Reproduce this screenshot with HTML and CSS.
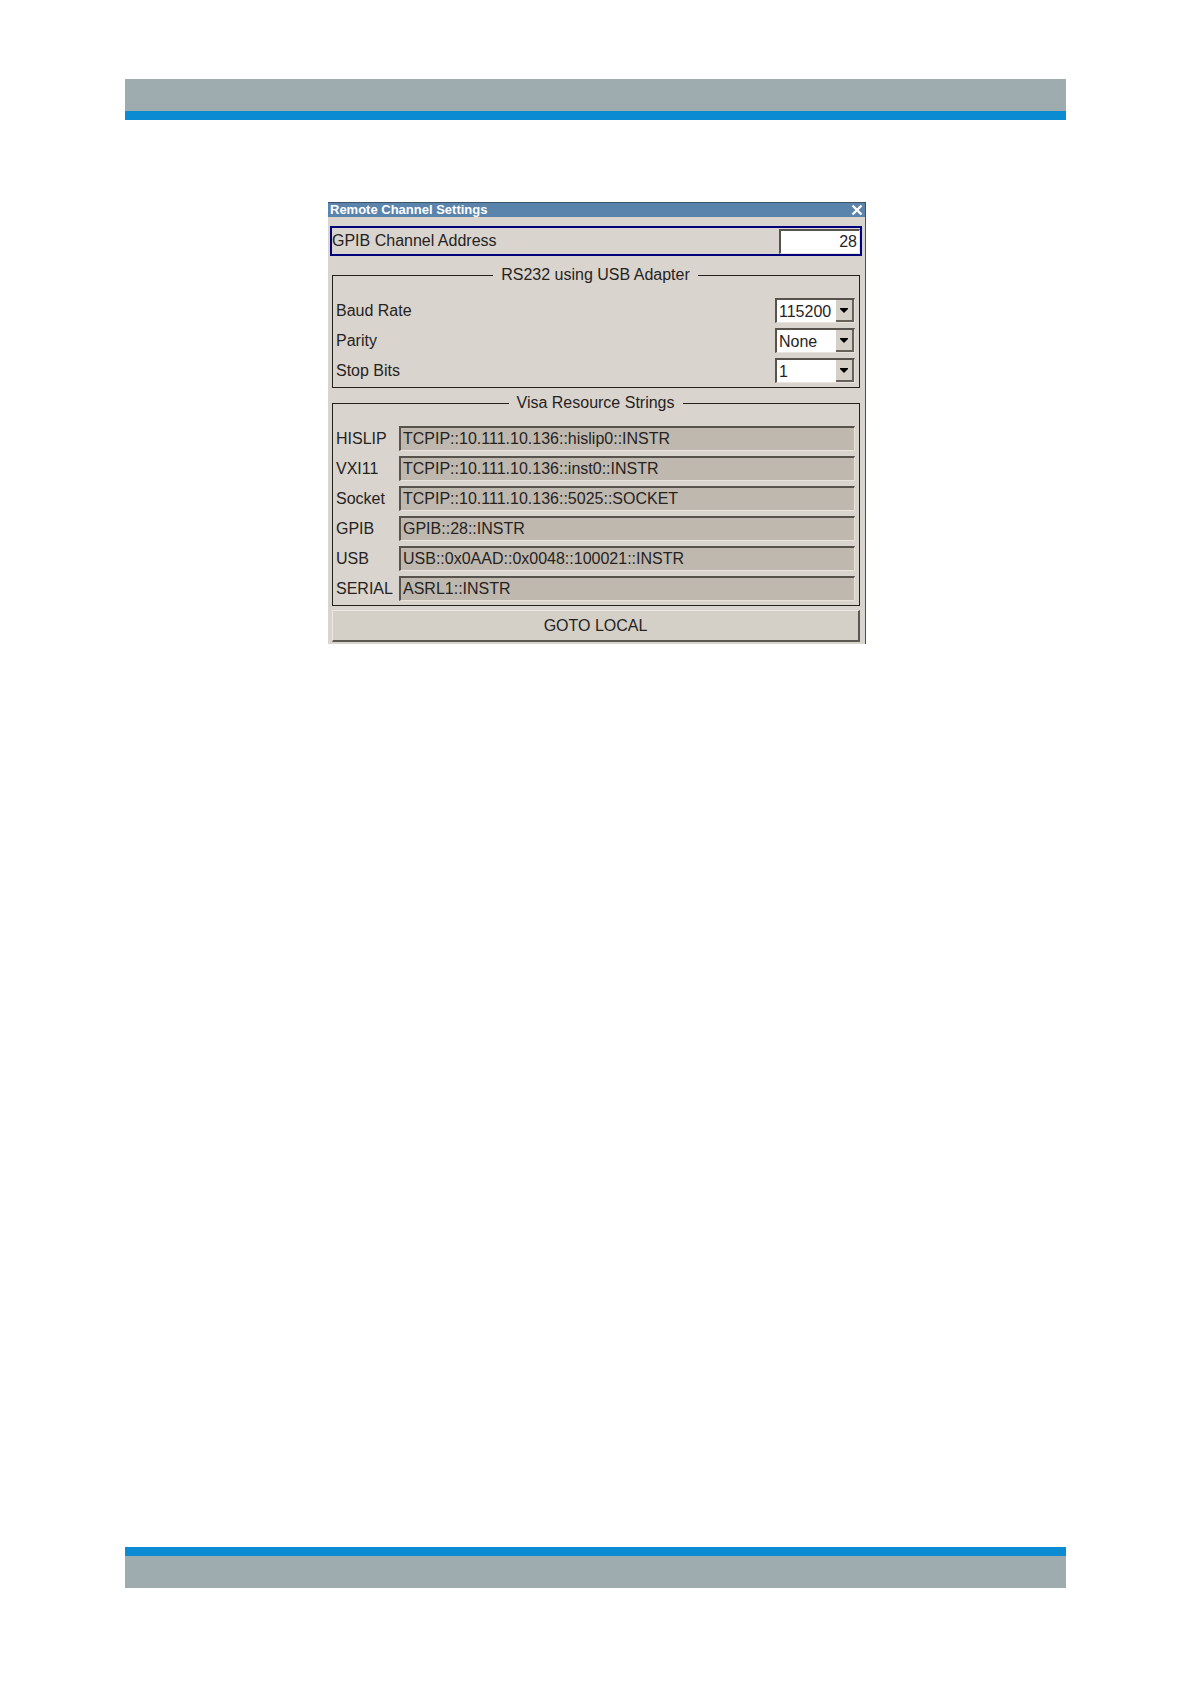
FILE: index.html
```html
<!DOCTYPE html>
<html lang="en">

<head>
<meta charset="utf-8">
<title>Remote Channel Settings</title>
<link rel="stylesheet" href="styles.css">
</head>

<body>
<header class="band band-top"></header>

<main>
<form class="dialog">
	<div class="titlebar">
		<h1>Remote Channel Settings</h1>
		<button type="button" class="close" aria-label="Close">
			<svg width="12" height="12" viewBox="0 0 12 12"><path d="M1.5 1.5L10.5 10.5M10.5 1.5L1.5 10.5" stroke="#fff" stroke-width="2.4"/></svg>
		</button>
	</div>

	<div class="address">
		<label for="address">GPIB Channel Address</label>
		<input id="address" class="sunken" type="text" value="28">
	</div>

	<fieldset class="serial">
		<legend>RS232 using USB Adapter</legend>
		<div class="rows">
			<label for="baud">Baud Rate</label>
			<span class="combo sunken">
				<select id="baud"><option>115200</option></select>
				<svg class="arrow" viewBox="0 0 16 20"><path d="M4 8H12V9L8 13L4 9Z"/></svg>
			</span>
			<label for="parity">Parity</label>
			<span class="combo sunken">
				<select id="parity"><option>None</option></select>
				<svg class="arrow" viewBox="0 0 16 20"><path d="M4 8H12V9L8 13L4 9Z"/></svg>
			</span>
			<label for="stop">Stop Bits</label>
			<span class="combo sunken">
				<select id="stop"><option>1</option></select>
				<svg class="arrow" viewBox="0 0 16 20"><path d="M4 8H12V9L8 13L4 9Z"/></svg>
			</span>
		</div>
	</fieldset>

	<fieldset class="visa">
		<legend>Visa Resource Strings</legend>
		<div class="rows">
			<label for="hislip">HISLIP</label>
			<input id="hislip" class="sunken" type="text" readonly value="TCPIP::10.111.10.136::hislip0::INSTR">
			<label for="vxi">VXI11</label>
			<input id="vxi" class="sunken" type="text" readonly value="TCPIP::10.111.10.136::inst0::INSTR">
			<label for="socket">Socket</label>
			<input id="socket" class="sunken" type="text" readonly value="TCPIP::10.111.10.136::5025::SOCKET">
			<label for="gpib">GPIB</label>
			<input id="gpib" class="sunken" type="text" readonly value="GPIB::28::INSTR">
			<label for="usb">USB</label>
			<input id="usb" class="sunken" type="text" readonly value="USB::0x0AAD::0x0048::100021::INSTR">
			<label for="asrl">SERIAL</label>
			<input id="asrl" class="sunken" type="text" readonly value="ASRL1::INSTR">
		</div>
	</fieldset>

	<button type="button" class="local">GOTO LOCAL</button>
</form>
</main>

<footer class="band band-bottom"></footer>
</body>

</html>
```
FILE: styles.css
```css
* { box-sizing: border-box; }
body {
	background: #fff;
	display: flex;
	flex-direction: column;
	margin: 0;
	min-height: 100vh;
	padding: 79px 125px 96px;
}
body, input, select, button { color: #26231f; font-family: "Liberation Sans", Arial, sans-serif; font-size: 16px; }
main { flex: 1; padding: 82px 0 82px 3px; }

.band { background: #9eabaf; height: 41px; }
.band-top { border-bottom: 9px solid #0b8cd2; }
.band-bottom { border-top: 9px solid #0b8cd2; }

.dialog {
	background: #d9d4cd;
	border-right: 1px solid #4a4c50;
	border-top: 1px solid #3c5468;
	margin: 0 auto;
	max-width: 538px;
	padding-bottom: 2px;
}
.titlebar {
	align-items: center;
	background: #5b84ad;
	display: flex;
	height: 14px;
	justify-content: space-between;
	padding: 0 2px;
}
.titlebar h1 { color: #fff; font-size: 13px; line-height: 14px; margin: 0; }
.close { background: none; border: 0; display: flex; padding: 0; }

/* dark top and left edge, light bottom and right edge */
.sunken {
	border: 1px solid #e9e3dc;
	border-left: 2px solid #57534c;
	border-top: 2px solid #57534c;
	border-radius: 0;
	height: 25px;
	outline: 0;
}

.address {
	align-items: center;
	border: 2px solid #00007c;
	display: flex;
	height: 30px;
	justify-content: space-between;
	margin: 9px 3px 0 2px;
}
.address input { background: #fff; padding: 0 2px; text-align: right; width: 81px; }

fieldset { border: 1px solid #24211d; margin: 0 5px 0 4px; min-width: 0; padding: 0 4px 4px 3px; }
legend { line-height: 18px; margin: 0 auto; padding: 0 8px; }
.serial { margin-top: 10px; }
.visa { margin-top: 6px; }
.rows { align-items: center; display: grid; gap: 5px 0; padding-top: 14px; }
.serial .rows { grid-template-columns: 1fr 80px; }
.visa .rows { grid-template-columns: 63px 1fr; }
.visa input { background: #bfb8af; min-width: 0; padding: 0 2px; width: 100%; }

.combo { background: #fff; display: grid; }
.combo select {
	appearance: none;
	background: none;
	border: 0;
	grid-area: 1 / 1;
	outline: 0;
	padding: 0 18px 0 2px;
	width: 100%;
}
.arrow {
	background: #d4d0c8;
	border-bottom: 2px solid #66625b;
	border-right: 2px solid #66625b;
	grid-area: 1 / 1;
	height: 22px;
	justify-self: end;
	pointer-events: none;
	width: 18px;
}

.local {
	background: #d4d0c8;
	border: 1px solid #ece8e1;
	border-bottom: 2px solid #5b5852;
	border-right: 2px solid #5b5852;
	display: block;
	height: 32px;
	margin: 4px 5px 0 4px;
	padding: 0;
	width: calc(100% - 9px);
}
```
